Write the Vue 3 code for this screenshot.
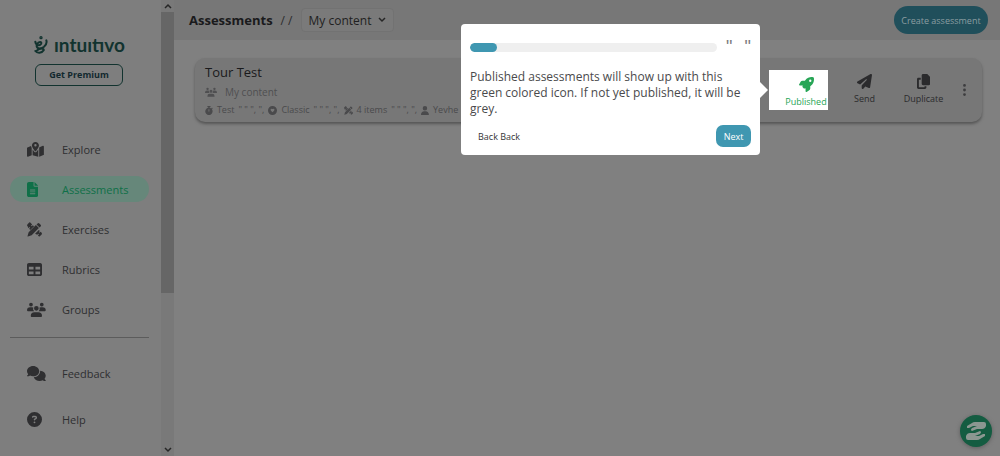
<script setup>
import { h } from 'vue'

const shapes = {
  map: ['0 0 576 512', 'M408 120c0 54.6-73.1 151.9-105.2 192c-7.7 9.6-22 9.6-29.6 0C241.1 271.9 168 174.6 168 120C168 53.7 221.7 0 288 0s120 53.7 120 120zm8 80.4c3.5-6.9 6.7-13.8 9.6-20.6c.5-1.2 1-2.5 1.5-3.7l116-46.4C558.9 123.4 576 135 576 152V422.8c0 9.8-6 18.6-15.1 22.3L416 503V200.4zM137.6 138.3c2.4 14.1 7.2 28.3 12.8 41.5c2.9 6.8 6.1 13.7 9.6 20.6V451.8L32.9 502.7C17.1 509 0 497.4 0 480.4V209.6c0-9.8 6-18.6 15.1-22.3l122.6-49zM327.8 332c13.9-17.4 35.7-45.7 56.2-77V504.3L192 449.4V255c20.5 31.3 42.3 59.6 56.2 77c20.5 25.6 59.1 25.6 79.6 0zM288 152a40 40 0 1 0 0-80 40 40 0 1 0 0 80z'],
  file: ['0 0 384 512', 'M64 0C28.7 0 0 28.7 0 64V448c0 35.3 28.7 64 64 64H320c35.3 0 64-28.7 64-64V160H256c-17.7 0-32-14.3-32-32V0H64zM256 0V128H384L256 0zM112 256H272a16 16 0 0 1 0 32H112a16 16 0 0 1 0-32zm0 64H272a16 16 0 0 1 0 32H112a16 16 0 0 1 0-32zm0 64H272a16 16 0 0 1 0 32H112a16 16 0 0 1 0-32z'],
  tools: ['0 0 512 512', 'M20 75L75 20q18-18 36 0l65 65l-38 38l22 22l38-38l42 42L113 276l-42-42l38-38l-22-22l-38 38L20 147q-36-36 0-72zM276 400l127-127l38 38l-34 34l22 22l34-34l29 29q36 36 0 72l-55 55q-18 18-36 0l-29-29l34-34l-22-22l-34 34zM362 48q30-30 60 0l42 42q30 30 0 60l-36 36L326 84zM304 106L406 208L158 456L34 492q-20 5-15-15L56 354z'],
  table: ['0 0 512 512', 'M64 256V160H224v96H64zm0 64H224v96H64V320zm224 96V320H448v96H288zM448 256H288V160H448v96zM64 32C28.7 32 0 60.7 0 96V416c0 35.3 28.7 64 64 64H448c35.3 0 64-28.7 64-64V96c0-35.3-28.7-64-64-64H64z'],
  people: ['0 0 640 512', 'M72 88a64 64 0 1 1 128 0a64 64 0 1 1-128 0zM440 88a64 64 0 1 1 128 0a64 64 0 1 1-128 0zM240 216a80 80 0 1 1 160 0a80 80 0 1 1-160 0zM0 285q0-109 107-109h58q28 0 50 12q-30 66 28 124H27q-27 0-27-27zM397 312q58-58 28-124q22-12 50-12h58q107 0 107 109q0 27-27 27zM128 479q0-127 128-127h128q128 0 128 127q0 33-33 33H161q-33 0-33-33z'],
  comments: ['0 0 640 512', 'M208 352c114.9 0 208-78.8 208-176S322.9 0 208 0S0 78.8 0 176c0 38.6 14.7 74.3 39.6 103.4c-3.5 9.4-8.7 17.7-14.2 24.7c-4.8 6.2-9.7 11-13.3 14.3c-1.8 1.6-3.3 2.9-4.3 3.7c-.5 .4-.9 .7-1.1 .8l-.2 .2C1 327.2-1.4 334.4 .8 340.9S9.1 352 16 352c21.8 0 43.8-5.6 62.1-12.5c9.2-3.5 17.8-7.4 25.2-11.4C134.1 343.3 169.8 352 208 352zM448 176c0 112.3-99.1 196.9-216.5 207C255.8 457.4 336.4 512 432 512c38.2 0 73.9-8.7 104.7-23.9c7.5 4 16 7.9 25.2 11.4c18.3 6.9 40.3 12.5 62.1 12.5c6.9 0 13.1-4.5 15.2-11.1c2.1-6.6-.2-13.8-5.8-17.9l-.2-.2c-.2-.2-.6-.4-1.1-.8c-1-.8-2.5-2-4.3-3.7c-3.6-3.3-8.5-8.1-13.3-14.3c-5.5-7-10.7-15.4-14.2-24.7c24.9-29 39.6-64.7 39.6-103.4c0-92.8-84.9-168.9-192.6-175.5c.4 5.1 .6 10.3 .6 15.5z'],
  help: ['0 0 512 512', 'M256 512A256 256 0 1 0 256 0a256 256 0 1 0 0 512zM169.8 165.3c7.9-22.3 29.1-37.3 52.8-37.3h58.3c34.9 0 63.1 28.3 63.1 63.1c0 22.6-12.1 43.5-31.7 54.8L280 264.4c-.2 13-10.9 23.6-24 23.6c-13.3 0-24-10.7-24-24V250.5c0-8.6 4.6-16.5 12.1-20.8l44.3-25.4c4.7-2.7 7.6-7.7 7.6-13.1c0-8.4-6.8-15.1-15.1-15.1H222.6c-3.4 0-6.4 2.1-7.5 5.3l-.4 1.2c-4.4 12.5-18.2 19-30.6 14.6s-19-18.2-14.6-30.6zM224 352a32 32 0 1 1 64 0 32 32 0 1 1 -64 0z'],
  rocket: ['0 0 512 512', 'M156.6 384.9L125.7 354c-8.5-8.5-11.5-20.8-7.7-32.2c3-8.9 7-20.5 11.8-33.8L24 288c-8.6 0-16.6-4.6-20.9-12.1s-4.2-16.7 .2-24.1l52.5-88.5c13-21.9 36.5-35.3 61.9-35.3l82.3 0c2.4-4 4.8-7.7 7.2-11.3C289.1-4.1 411.1-8.1 483.9 5.3c11.6 2.1 20.6 11.2 22.8 22.8c13.4 72.9 9.3 194.8-111.4 276.7c-3.5 2.4-7.3 4.8-11.3 7.2v82.3c0 25.4-13.4 49-35.3 61.9l-88.5 52.5c-7.4 4.4-16.6 4.5-24.1 .2s-12.1-12.2-12.1-20.9V380.8c-14.1 4.9-26.4 8.9-35.7 11.9c-11.2 3.6-23.4 .5-31.8-7.8zM384 168a40 40 0 1 0 0-80 40 40 0 1 0 0 80z'],
  plane: ['0 0 512 512', 'M498.1 5.6c10.1 7 15.4 19.1 13.5 31.2l-64 416c-1.5 9.7-7.4 18.2-16 23s-18.9 5.4-28 1.6L284 427.7l-68.5 74.1c-8.9 9.7-22.9 12.9-35.2 8.1S160 493.2 160 480V396.4c0-4 1.5-7.8 4.2-10.7L331.8 202.8c5.8-6.3 5.6-16-.4-22s-15.7-6.4-22-.7L106 360.8 17.7 316.6C7.1 311.3 .3 300.7 0 288.9s5.9-22.8 16.1-28.7l448-256c10.7-6.1 23.9-5.5 34 1.4z'],
  copy: ['0 0 448 512', 'M208 0H332.1c12.7 0 24.9 5.1 33.9 14.1l67.9 67.9c9 9 14.1 21.2 14.1 33.9V336c0 26.5-21.5 48-48 48H208c-26.5 0-48-21.5-48-48V48c0-26.5 21.5-48 48-48zM48 128h80v64H64V448H256V416h64v48c0 26.5-21.5 48-48 48H48c-26.5 0-48-21.5-48-48V176c0-26.5 21.5-48 48-48z'],
  timer: ['0 0 448 512', 'M160 0H288a32 32 0 0 1 0 64H256V98q56 9 98 42l25-25a32 32 0 0 1 45 45l-28 28A208 208 0 1 1 192 98V64H160a32 32 0 0 1 0-64zM200 192V304a24 24 0 0 0 48 0V192a24 24 0 0 0-48 0z'],
  disc: ['0 0 512 512', 'M256 0a256 256 0 1 0 0 512a256 256 0 1 0 0-512zM160 170q48-40 96 6q48-46 96-6q36 40-8 98l-88 92l-88-92q-44-58-8-98z'],
  user: ['0 0 448 512', 'M224 256a128 128 0 1 0 0-256a128 128 0 1 0 0 256zM178 304C80 304 0 384 0 482q0 30 30 30H418q30 0 30-30C448 384 368 304 270 304z'],
  dots: ['0 0 128 512', 'M64 120a60 60 0 1 0 0-120a60 60 0 1 0 0 120zM64 316a60 60 0 1 0 0-120a60 60 0 1 0 0 120zM64 512a60 60 0 1 0 0-120a60 60 0 1 0 0 120z'],
}

const Icon = ({ name }) =>
  h('svg', { viewBox: shapes[name][0], 'aria-hidden': 'true', fill: 'currentColor' }, [
    h('path', { d: shapes[name][1], 'fill-rule': 'evenodd' }),
  ])
Icon.props = ['name']

const mainLinks = [
  { icon: 'map', label: 'Explore' },
  { icon: 'file', label: 'Assessments', active: true },
  { icon: 'tools', label: 'Exercises' },
  { icon: 'table', label: 'Rubrics' },
  { icon: 'people', label: 'Groups' },
]
const supportLinks = [
  { icon: 'comments', label: 'Feedback' },
  { icon: 'help', label: 'Help' },
]
const details = [
  { icon: 'timer', label: 'Test', tail: '" " ", ",' },
  { icon: 'disc', label: 'Classic', tail: '" " ", ",' },
  { icon: 'tools', label: '4 items', tail: '" " ", ",' },
  { icon: 'user', label: 'Yevhe', tail: '' },
]
const progress = 11
</script>

<template>
  <div class="app">
    <aside class="sidebar">
      <div class="brand">
        <svg class="mark" viewBox="0 0 42 54" aria-hidden="true" fill="none" stroke="currentColor" stroke-width="6" stroke-linecap="round">
          <path d="M4 17C5 28 17 30 21 24C25 17 14 15 9 25C4 37 18 42 30 32C38 25 39 19 37 13" />
          <path d="M4 45C9 52 24 52 29 43C31 37 18 35 8 44" />
          <circle cx="21" cy="5" r="2" />
        </svg>
        <span class="word">ıntuıtıvo</span>
      </div>
      <button class="premium" type="button">Get Premium</button>
      <nav class="nav" aria-label="Main">
        <a v-for="l in mainLinks" :key="l.label" href="#" class="link" :class="{ active: l.active }">
          <span class="slot"><Icon :name="l.icon" /></span>{{ l.label }}
        </a>
      </nav>
      <hr class="rule" />
      <nav class="nav support" aria-label="Support">
        <a v-for="l in supportLinks" :key="l.label" href="#" class="link">
          <span class="slot"><Icon :name="l.icon" /></span>{{ l.label }}
        </a>
      </nav>
    </aside>

    <div class="scrollbar" aria-hidden="true">
      <svg class="arrow" viewBox="0 0 8 6"><path d="M1 5L4 2L7 5" /></svg>
      <div class="track"><div class="thumb"></div></div>
      <svg class="arrow" viewBox="0 0 8 6"><path d="M1 1L4 4L7 1" /></svg>
    </div>

    <main class="main">
      <header class="topbar">
        <h1 class="heading">Assessments</h1>
        <span class="slashes">/ /</span>
        <button class="picker" type="button">
          My content
          <svg class="chevron" viewBox="0 0 8 6" aria-hidden="true"><path d="M1 1L4 4L7 1" /></svg>
        </button>
        <button class="create" type="button">Create assessment</button>
      </header>

      <article class="card">
        <div class="info">
          <h2 class="title">Tour Test</h2>
          <p class="owner"><Icon name="people" />My content</p>
          <p class="details">
            <span v-for="d in details" :key="d.label" class="detail">
              <Icon :name="d.icon" />{{ d.label }}<span v-if="d.tail" class="tail">{{ d.tail }}</span>
            </span>
          </p>
        </div>
        <div class="actions">
          <div class="spot">
            <button class="action published" type="button"><Icon name="rocket" />Published</button>
            <section class="tour" role="dialog" aria-label="Tour">
              <div class="tourhead">
                <div class="bar"><div class="fill" :style="{ width: progress + '%' }"></div></div>
                <button class="close" type="button" aria-label="Close tour"><span>"</span><span>"</span></button>
              </div>
              <p class="message">Published assessments will show up with this green colored icon. If not yet published, it will be grey.</p>
              <div class="tourfoot">
                <button class="back" type="button">Back Back</button>
                <button class="next" type="button">Next</button>
              </div>
            </section>
          </div>
          <button class="action send" type="button"><Icon name="plane" />Send</button>
          <button class="action duplicate" type="button"><Icon name="copy" />Duplicate</button>
          <button class="more" type="button" aria-label="More"><Icon name="dots" /></button>
        </div>
      </article>
    </main>

    <button class="support-fab" type="button" aria-label="Support">
      <svg viewBox="0 0 32 32" aria-hidden="true" fill="currentColor">
        <path d="M7 11L12 8Q13 7 15 7H24Q26 7 26 9V11Q25 14 22 14H17L12 16Q10 15 12 13L17 11H13L9 13H7Z" />
        <path d="M25 21L20 24Q19 25 17 25H8Q6 25 6 23V21Q7 18 10 18H15L20 16Q22 17 20 19L15 21H19L23 19H25Z" />
      </svg>
    </button>
  </div>
</template>

<style>
body {
  margin: 0;
  background: #808080;
}
</style>

<style scoped>
.app {
  display: flex;
  min-height: 100vh;
  background: #808080;
  color: #2b2b2d;
  font-family: "Open Sans", "Noto Sans", sans-serif;
  font-size: 12px;
}
button {
  border: 0;
  padding: 0;
  margin: 0;
  background: none;
  color: inherit;
  font: inherit;
  white-space: nowrap;
}
h1, h2, p { margin: 0; }
.sidebar {
  width: 161px;
  flex: none;
  box-sizing: border-box;
  padding: 34px 12px 0 10px;
  background: #7e7e7e;
}
.brand {
  display: flex;
  align-items: center;
  height: 22px;
  padding-left: 24px;
  gap: 6px;
  color: #12332f;
}
.mark { width: 14px; height: 18px; flex: none; }
.word {
  font-family: Lato, sans-serif;
  font-weight: 700;
  font-size: 19px;
  line-height: 22px;
}
.premium {
  display: block;
  width: 88px;
  height: 22px;
  margin: 8px 0 0 25px;
  box-sizing: border-box;
  border: 1px solid #12332f;
  border-radius: 6px;
  color: #12282e;
  font-size: 9px;
  font-weight: 700;
  line-height: 18px;
}
.nav {
  display: flex;
  flex-direction: column;
  gap: 14px;
  margin-top: 50px;
}
.link {
  display: flex;
  align-items: center;
  height: 26px;
  padding-left: 17px;
  border-radius: 13px;
  color: #2f2f31;
  font-size: 11px;
  text-decoration: none;
}
.slot { display: flex; width: 35px; flex: none; }
.slot svg { height: 15px; }
.active { background: #66877a; color: #0f7048; }
.rule {
  height: 1px;
  margin: 15px 0 0;
  border: 0;
  background: #5c5c5c;
}
.support { gap: 20px; margin-top: 22px; }
.scrollbar {
  width: 13px;
  flex: none;
  display: flex;
  flex-direction: column;
  align-items: center;
  background: #797979;
}
.arrow, .chevron {
  width: 8px;
  height: 6px;
  fill: none;
  stroke: #262626;
  stroke-width: 1.5;
}
.arrow { padding: 3px 0; }
.track { flex: 1; align-self: stretch; }
.thumb { height: 65%; background: #666; }
.main { flex: 1; min-width: 0; }
.topbar {
  display: flex;
  align-items: center;
  height: 40px;
  padding: 0 12px 0 15px;
  background: #777;
}
.heading { font-size: 13px; font-weight: 700; color: #1a1a1c; }
.slashes { margin: 0 8px; font-size: 12px; }
.picker {
  display: flex;
  align-items: center;
  gap: 7px;
  height: 24px;
  padding: 0 7px;
  border: 1px solid #727272;
  border-radius: 4px;
  background: #7a7a7a;
  color: #1f1f21;
  font-size: 12px;
}
.create {
  width: 94px;
  height: 28px;
  margin-left: auto;
  border-radius: 14px;
  background: #204f5b;
  color: #8b9da1;
  font-size: 9px;
}
.card {
  display: flex;
  justify-content: space-between;
  margin: 18px 18px 0 21px;
  min-height: 64px;
  border-radius: 10px;
  background: #777;
  box-shadow: 0 2px 3px #555;
}
.info { padding: 4px 0 0 10px; }
.title { font-size: 13px; line-height: 20px; font-weight: 400; color: #1a1a1c; }
.owner {
  display: flex;
  align-items: center;
  gap: 8px;
  line-height: 20px;
  font-size: 10px;
  color: #4f4f51;
}
.owner svg { width: 12px; height: 10px; }
.details {
  display: flex;
  gap: 4px;
  line-height: 16px;
  font-size: 9px;
  color: #4a4a4c;
  white-space: nowrap;
}
.detail { display: flex; align-items: center; gap: 4px; }
.detail svg { height: 9px; }
.actions { display: flex; align-items: center; }
.spot {
  position: relative;
  display: flex;
  justify-content: flex-end;
  width: 59px;
  height: 40px;
  background: #fff;
}
.action {
  display: flex;
  flex-direction: column;
  align-items: center;
  gap: 2px;
  width: 59px;
  font-size: 9px;
  line-height: 15px;
}
.action svg { height: 15px; }
.published { width: 44px; padding-top: 7px; color: #27a556; }
.send { margin-left: 7px; }
.more { display: flex; justify-content: center; width: 22px; margin-right: 7px; color: #3d3d3f; }
.more svg { height: 12px; }
.tour {
  position: absolute;
  right: calc(100% + 9px);
  top: -46px;
  width: 299px;
  box-sizing: border-box;
  padding: 12px 9px 8px;
  border-radius: 4px;
  background: #fff;
  color: #4a4a4c;
}
.tour::after {
  content: "";
  position: absolute;
  left: 100%;
  top: 58px;
  border: 8px solid transparent;
  border-left-color: #fff;
  border-right-width: 0;
}
.tourhead { display: flex; align-items: center; gap: 9px; height: 22px; }
.bar { flex: 1; height: 9px; border-radius: 5px; background: #efefef; overflow: hidden; }
.fill { height: 100%; border-radius: 5px; background: #3f97b1; }
.close {
  display: flex;
  justify-content: space-between;
  width: 25px;
  font-family: "Liberation Sans", sans-serif;
  font-size: 18px;
  line-height: 22px;
  color: #7c7c7e;
}
.message { margin-top: 11px; font-size: 12px; line-height: 16px; }
.tourfoot {
  display: flex;
  justify-content: space-between;
  align-items: center;
  margin-top: 8px;
  font-size: 9px;
}
.back { padding-left: 8px; color: #353537; }
.next {
  width: 35px;
  height: 22px;
  border-radius: 7px;
  background: #3f97b1;
  color: #fff;
}
.support-fab {
  position: fixed;
  right: 8px;
  bottom: 9px;
  width: 32px;
  height: 32px;
  border-radius: 50%;
  background: #145c41;
  color: #8b9791;
  box-shadow: 0 1px 4px #5c5c5c;
}
.support-fab svg { display: block; width: 32px; height: 32px; }
</style>
